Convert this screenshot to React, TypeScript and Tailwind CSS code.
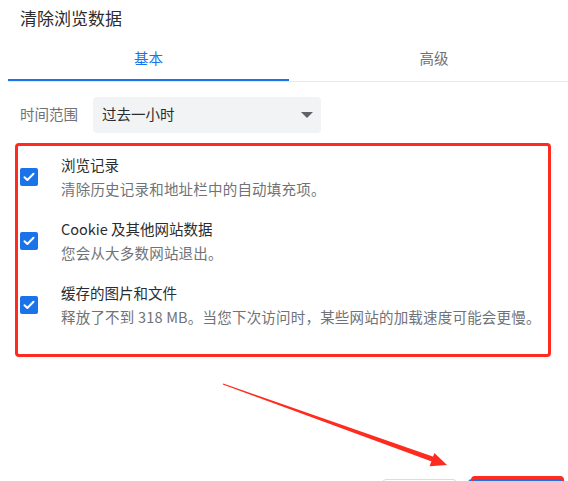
import React from 'react'

const items = [
  { title: '浏览记录', desc: '清除历史记录和地址栏中的自动填充项。' },
  { title: 'Cookie 及其他网站数据', desc: '您会从大多数网站退出。' },
  { title: '缓存的图片和文件', desc: '释放了不到 318 MB。当您下次访问时，某些网站的加载速度可能会更慢。' },
]

function CheckBox() {
  return (
    <div className="w-[18px] h-[18px] shrink-0 rounded-[2px] bg-[#1a73e8] flex items-center justify-center">
      <svg width="12" height="10" viewBox="0 0 12 10" fill="none">
        <path d="M1.5 5.2 4.4 8 10.5 1.8" stroke="white" strokeWidth="2" strokeLinecap="round" strokeLinejoin="round" />
      </svg>
    </div>
  )
}

export default function App() {
  return (
    <div
      className="relative w-[568px] h-[481px] overflow-hidden bg-white text-[#202124]"
      style={{ fontFamily: '"Noto Sans CJK SC", "Noto Sans", sans-serif' }}
    >
      {/* Title */}
      <div className="h-[36px] px-[20px] flex items-center text-[17px] text-[#2b2c2f]">清除浏览数据</div>

      {/* Tabs */}
      <div className="flex ml-[8px] h-[46px] border-b border-[#e8eaed] w-[580px]">
        <div className="w-[281px] flex flex-col">
          <div className="flex-1 flex items-center justify-center text-[14.5px] text-[#1a73e8]">基本</div>
          <div className="h-[2px] bg-[#1a73e8]" />
        </div>
        <div className="w-[290px] flex flex-col">
          <div className="flex-1 flex items-center justify-center text-[14.5px] text-[#6f7378]">高级</div>
          <div className="h-[2px]" />
        </div>
      </div>

      {/* Time range */}
      <div className="flex items-center mt-[15px] pl-[20px] gap-[15px]">
        <span className="text-[14.5px] text-[#6f7378] pb-[3px]">时间范围</span>
        <div className="w-[228px] h-[36px] rounded-[4px] bg-[#f1f3f4] flex items-center justify-between pl-[9px] pr-[8px]">
          <span className="text-[14.5px] text-[#2b2c2f] pb-[3px]">过去一小时</span>
          <svg width="12" height="6" viewBox="0 0 12 6">
            <path d="M0 0h12L6 6z" fill="#5f6368" />
          </svg>
        </div>
      </div>

      {/* Checkbox list (annotated) */}
      <div className="mt-[10px] ml-[15px] w-[536px] h-[214px] border-[3px] border-[#fe2b1e] rounded-[4px] pt-[7px] pl-[2px] flex flex-col gap-[16px]">
        {items.map((it) => (
          <div key={it.title} className="flex items-center gap-[23px]">
            <CheckBox />
            <div className="flex flex-col leading-[24px] text-[14.5px] whitespace-nowrap">
              <span className="text-[#2b2c2f]">{it.title}</span>
              <span className="text-[#6f7378] tracking-[0.2px]">{it.desc}</span>
            </div>
          </div>
        ))}
      </div>

      {/* Buttons */}
      <div className="flex items-start mt-[119px] pl-[382px] gap-[11px]">
        <div className="mt-[3px] w-[75px] h-[36px] rounded-[4px] border border-[#dadce0] bg-white" />
        <div className="relative mt-[3px] w-[97px] h-[36px] rounded-[4px] bg-[#1a73e8]">
          <div className="absolute -top-[3px] left-[3px] right-[1px] h-[40px] rounded-[4px] border-[3px] border-[#fe2b1e]" />
        </div>
      </div>

      {/* Annotation arrow */}
      <svg className="absolute left-0 top-0 pointer-events-none" width="568" height="481" viewBox="0 0 568 481">
        <polygon points="222.8,384.5 223.2,383.5 434.9,457.2 433.1,462.0" fill="#fe2b1e" />
        <polygon points="447,465 434.4,453 429.6,466.2" fill="#fe2b1e" />
      </svg>
    </div>
  )
}
